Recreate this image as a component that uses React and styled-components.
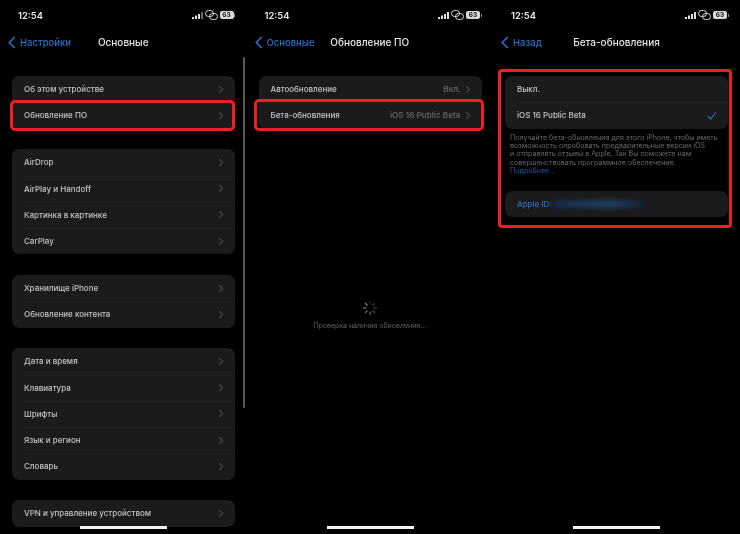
import React from 'react'
import styled, { createGlobalStyle } from 'styled-components'

const Global = createGlobalStyle`
  html, body { margin: 0; padding: 0; background: #000; }
  body { font-family: "Inter", "Liberation Sans", sans-serif; }
`

const Page = styled.div`
  display: grid;
  grid-template-columns: 246.5px 246.5px 247px;
  width: 740px;
  height: 534px;
  overflow: hidden;
  background: #000;
  filter: blur(0.3px);
`

const Phone = styled.div`
  position: relative;
  height: 534px;
  padding: 0 12px;
  box-sizing: border-box;
  overflow: hidden;
`

const StatusBar = styled.div`
  display: flex;
  align-items: center;
  justify-content: space-between;
  height: 30px;
  padding: 0 0 0 6px;
  color: #e8e8e8;
  font-size: 9.4px;
  font-weight: 600;
`

const StatusIcons = styled.div`
  display: flex;
  align-items: center;
  gap: 2px;
`

const Battery = styled.span`
  position: relative;
  width: 14px;
  height: 8px;
  margin-right: 1px;
  border-radius: 2px;
  background: #d8d8d8;
  color: #222;
  font-size: 6.5px;
  font-weight: 700;
  line-height: 8px;
  text-align: center;
  &::after {
    content: "";
    position: absolute;
    right: -1.5px;
    top: 2.5px;
    width: 1px;
    height: 3px;
    background: #8a8a8a;
  }
`

const Nav = styled.div`
  position: relative;
  display: flex;
  align-items: center;
  justify-content: center;
  height: 24px;
  margin: 0 0 22px;
  color: #e4e4e4;
  font-size: 10px;
  font-weight: 500;
`

const Back = styled.div`
  position: absolute;
  left: -4px;
  top: 0;
  height: 24px;
  display: flex;
  align-items: center;
  gap: 4px;
  color: #2a6fc4;
  font-size: 9.5px;
  font-weight: 500;
`

const Card = styled.div`
  width: 223px;
  margin-top: ${p => p.$top || 0}px;
  margin-bottom: ${p => p.$gap ?? 20.75}px;
  border-radius: 7px;
  background: #1b1b1e;
`

const Row = styled.div`
  position: relative;
  display: flex;
  align-items: center;
  justify-content: space-between;
  height: 26.25px;
  padding: 0 11px 0 12px;
  color: #c4c4c6;
  font-size: 8px;
  font-weight: 500;
  & + &::before {
    content: "";
    position: absolute;
    left: 12px;
    right: 0;
    top: 0;
    height: 1px;
    background: #222224;
  }
  ${p => p.$marked && `
    &::after {
      content: "";
      position: absolute;
      left: ${-p.$marked[0]}px;
      right: ${-p.$marked[1]}px;
      top: ${-p.$marked[2]}px;
      bottom: -2px;
      border: 3px solid #f01d23;
      border-radius: 5px;
    }
  `}
`

const Value = styled.div`
  display: flex;
  align-items: center;
  gap: 4px;
  color: #68686c;
  font-size: 8.2px;
`

const Frame = styled.div`
  position: absolute;
  left: 5px;
  top: 69px;
  width: 234px;
  height: 159px;
  border: 3px solid #f01d23;
  border-radius: 4px;
  box-sizing: border-box;
`

const Note = styled.div`
  margin: 5px 0 0 5px;
  height: 42px;
  color: #6a6a6e;
  font-size: 7.1px;
  line-height: 8.4px;
  white-space: nowrap;
  a { color: #1c55a8; }
`

const AppleId = styled.span`
  color: #2a6fc4;
  display: flex;
  align-items: center;
  gap: 1px;
`

const Blurred = styled.span`
  display: block;
  width: 90px;
  height: 8px;
  background: linear-gradient(90deg, #152a42, #1c3856 35%, #20405f 65%, #122234);
  filter: blur(2px);
`

const Spinner = styled.svg`
  position: absolute;
  left: 115px;
  top: 300px;
`

const Loading = styled.div`
  position: absolute;
  left: 0;
  right: 0;
  top: 321px;
  color: #606064;
  font-size: 7px;
  text-align: center;
`

const ScrollBar = styled.div`
  position: absolute;
  left: 243px;
  top: 57px;
  width: 2px;
  height: 351px;
  border-radius: 1px;
  background: #58585a;
`

const HomeBar = styled.div`
  position: absolute;
  left: 80px;
  bottom: 5px;
  width: 87px;
  height: 3px;
  background: #f4f4f4;
`

const Chevron = () => (
  <svg width="6" height="9" viewBox="0 0 6 9" fill="none">
    <path d="M1.2 1l3.4 3.5L1.2 8" stroke="#434347" strokeWidth="1.2" />
  </svg>
)

const BackArrow = () => (
  <svg width="8" height="13" viewBox="0 0 8 13" fill="none">
    <path d="M6.8 1L1.3 6.5l5.5 5.5" stroke="#2a6fc4" strokeWidth="1.7" />
  </svg>
)

const Check = () => (
  <svg width="10" height="9" viewBox="0 0 10 9" fill="none">
    <path d="M1 5l2.6 3L9 1" stroke="#2a6fc4" strokeWidth="1.2" />
  </svg>
)

const Status = ({ dim }) => (
  <StatusBar>
    <span>12:54</span>
    <StatusIcons>
      <svg width="11" height="7" viewBox="0 0 11 7" fill="#e0e0e0">
        <rect x="0" y="5" width="2" height="2" />
        <rect x="3" y="3.5" width="2" height="3.5" />
        <rect x="6" y="2" width="2" height="5" />
        <rect x="9" y="0" width="2" height="7" fill={dim ? '#666' : '#e0e0e0'} />
      </svg>
      <svg width="13" height="10" viewBox="0 0 13 10" fill="none" stroke="#d8d8d8" strokeWidth="1">
        <rect x="0.5" y="0.5" width="8" height="6" rx="3" />
        <rect x="4.5" y="3.5" width="8" height="6" rx="3" />
      </svg>
      <Battery>63</Battery>
    </StatusIcons>
  </StatusBar>
)

const Header = ({ back, title }) => (
  <Nav>
    <Back><BackArrow />{back}</Back>
    {title}
  </Nav>
)

const Item = ({ label, marked }) => (
  <Row $marked={marked}>
    {label}
    <Chevron />
  </Row>
)

const groups = [
  ['Об этом устройстве', 'Обновление ПО'],
  ['AirDrop', 'AirPlay и Handoff', 'Картинка в картинке', 'CarPlay'],
  ['Хранилище iPhone', 'Обновление контента'],
  ['Дата и время', 'Клавиатура', 'Шрифты', 'Язык и регион', 'Словарь'],
  ['VPN и управление устройством'],
]

const spokes = [0, 45, 90, 135, 180, 225, 270, 315]

export default function App() {
  return (
    <Page>
      <Global />
      <Phone>
        <Status dim />
        <Header back="Настройки" title="Основные" />
        {groups.map((group, i) => (
          <Card key={i}>
            {group.map(label => (
              <Item key={label} label={label} marked={label === 'Обновление ПО' ? [2, 0, 2] : null} />
            ))}
          </Card>
        ))}
        <ScrollBar />
        <HomeBar />
      </Phone>

      <Phone>
        <Status />
        <Header back="Основные" title="Обновление ПО" />
        <Card>
          <Row>Автообновление<Value>Вкл.<Chevron /></Value></Row>
          <Row $marked={[5, 2, 3]}>Бета-обновления<Value>iOS 16 Public Beta<Chevron /></Value></Row>
        </Card>
        <Spinner width="16" height="16" viewBox="0 0 16 16">
          {spokes.map((a, i) => (
            <line
              key={a}
              x1="8" y1="1" x2="8" y2="4.5"
              stroke="#8a8a8a"
              strokeWidth="1.2"
              opacity={0.3 + i * 0.1}
              transform={`rotate(${a} 8 8)`}
            />
          ))}
        </Spinner>
        <Loading>Проверка наличия обновления…</Loading>
        <HomeBar />
      </Phone>

      <Phone>
        <Status />
        <Header back="Назад" title="Бета-обновления" />
        <Card $gap={0}>
          <Row>Выкл.</Row>
          <Row>iOS 16 Public Beta<Check /></Row>
        </Card>
        <Note>
          Получайте бета-обновления для этого iPhone, чтобы иметь<br />
          возможность опробовать предварительные версии iOS<br />
          и отправлять отзывы в Apple. Так Вы поможете нам<br />
          совершенствовать программное обеспечение.<br />
          <a>Подробнее…</a>
        </Note>
        <Card $top={15}>
          <Row><AppleId>Apple ID: <Blurred /></AppleId></Row>
        </Card>
        <Frame />
        <HomeBar />
      </Phone>
    </Page>
  )
}
